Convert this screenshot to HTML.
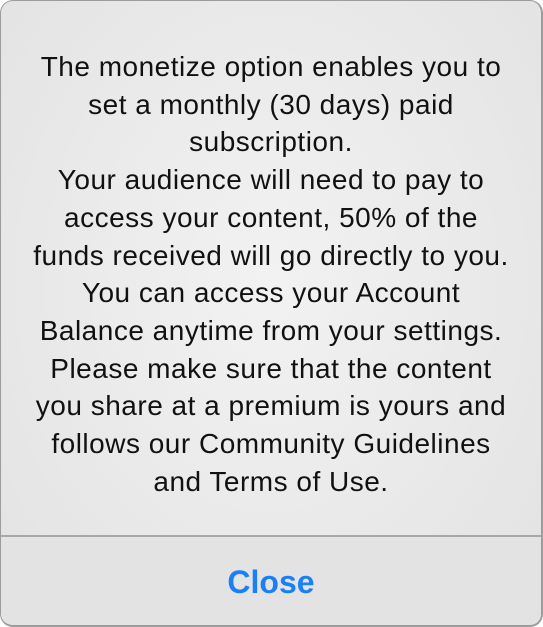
<!DOCTYPE html>
<html><head><style>
html,body{margin:0;padding:0;background:#fff;width:543px;height:627px;overflow:hidden}
.box{position:absolute;left:0;top:0;width:540px;height:624px;border:1px solid #9c9c9c;border-right-width:2px;border-bottom-width:2px;border-radius:13px;overflow:hidden;
background:radial-gradient(ellipse at 50% 45%,#f2f2f2 0%,#ebebeb 45%,#e2e2e2 100%)}
.msg{position:absolute;left:-10px;top:47px;width:560px;text-align:center;font-family:"Liberation Sans",sans-serif;font-size:28px;letter-spacing:0.5px;line-height:37.7px;color:#111}
.div{position:absolute;left:0;top:534px;width:540px;height:2px;background:#a8a8a8}
.btn{position:absolute;left:0;top:536px;width:540px;height:88px;background:#e3e3e3;text-align:center;line-height:90px;font-family:"Liberation Sans",sans-serif;font-size:32px;font-weight:bold;color:#1a80f8}
</style></head><body>
<div class="box">
<div class="msg">The monetize option enables you to<br>set a monthly (30 days) paid<br>subscription.<br>Your audience will need to pay to<br>access your content, 50% of the<br>funds received will go directly to you.<br>You can access your Account<br>Balance anytime from your settings.<br>Please make sure that the content<br>you share at a premium is yours and<br>follows our Community Guidelines<br>and Terms of Use.</div>
<div class="div"></div>
<div class="btn">Close</div>
</div>
</body></html>
